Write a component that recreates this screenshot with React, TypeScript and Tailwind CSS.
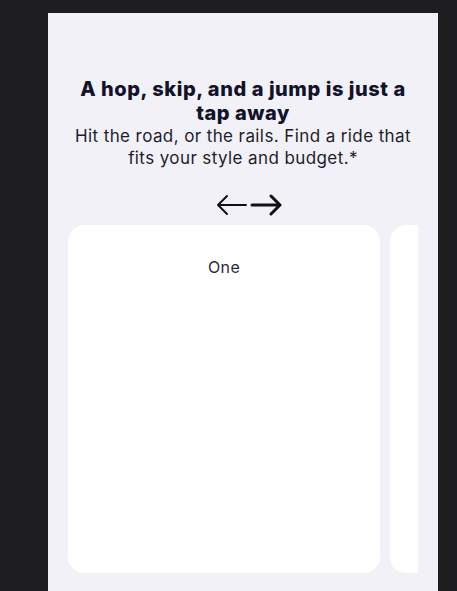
import React from "react";

export default function App() {
  return (
    <div className="min-h-[591px] w-full bg-[#1e1e20] pt-[13px] pl-[48px]" style={{ fontFamily: "Inter, 'Noto Sans', sans-serif" }}>
      <div className="w-[390px] min-h-[578px] bg-[#f1f1f7] pt-[64px] pb-[18px]">
        <h1 className="px-[26px] text-center text-[20px] leading-[24px] font-extrabold text-[#12122a] tracking-[0.55px]">
          A hop, skip, and a jump is just a tap away
        </h1>
        <p className="px-[20px] text-center text-[17px] leading-[22px] text-[#1d1d2b] tracking-[0.4px]">
          Hit the road, or the rails. Find a ride that fits your style and budget.*
        </p>
        <div className="mt-[24px] flex h-[24px] items-center justify-center gap-[3px] pl-[12px]">
          <svg width="31" height="24" viewBox="0 0 31 24" fill="none" stroke="#111" strokeWidth="2" strokeLinecap="round" strokeLinejoin="round">
            <path d="M30 12H2M11 3L2 12L11 21" />
          </svg>
          <svg width="32" height="24" viewBox="0 0 32 24" fill="none" stroke="#111" strokeWidth="3" strokeLinecap="round" strokeLinejoin="round">
            <path d="M2 12H30M21 3L30 12L21 21" />
          </svg>
        </div>
        <div className="mx-[20px] mt-[8px] flex gap-[10px] overflow-hidden">
          <div className="h-[348px] w-[312px] shrink-0 rounded-[16px] bg-white pt-[32px] text-center text-[16px] leading-[20px] tracking-[0.4px] text-[#2a2a3a]">
            One
          </div>
          <div className="h-[348px] w-[312px] shrink-0 rounded-[16px] bg-white" />
        </div>
      </div>
    </div>
  );
}
